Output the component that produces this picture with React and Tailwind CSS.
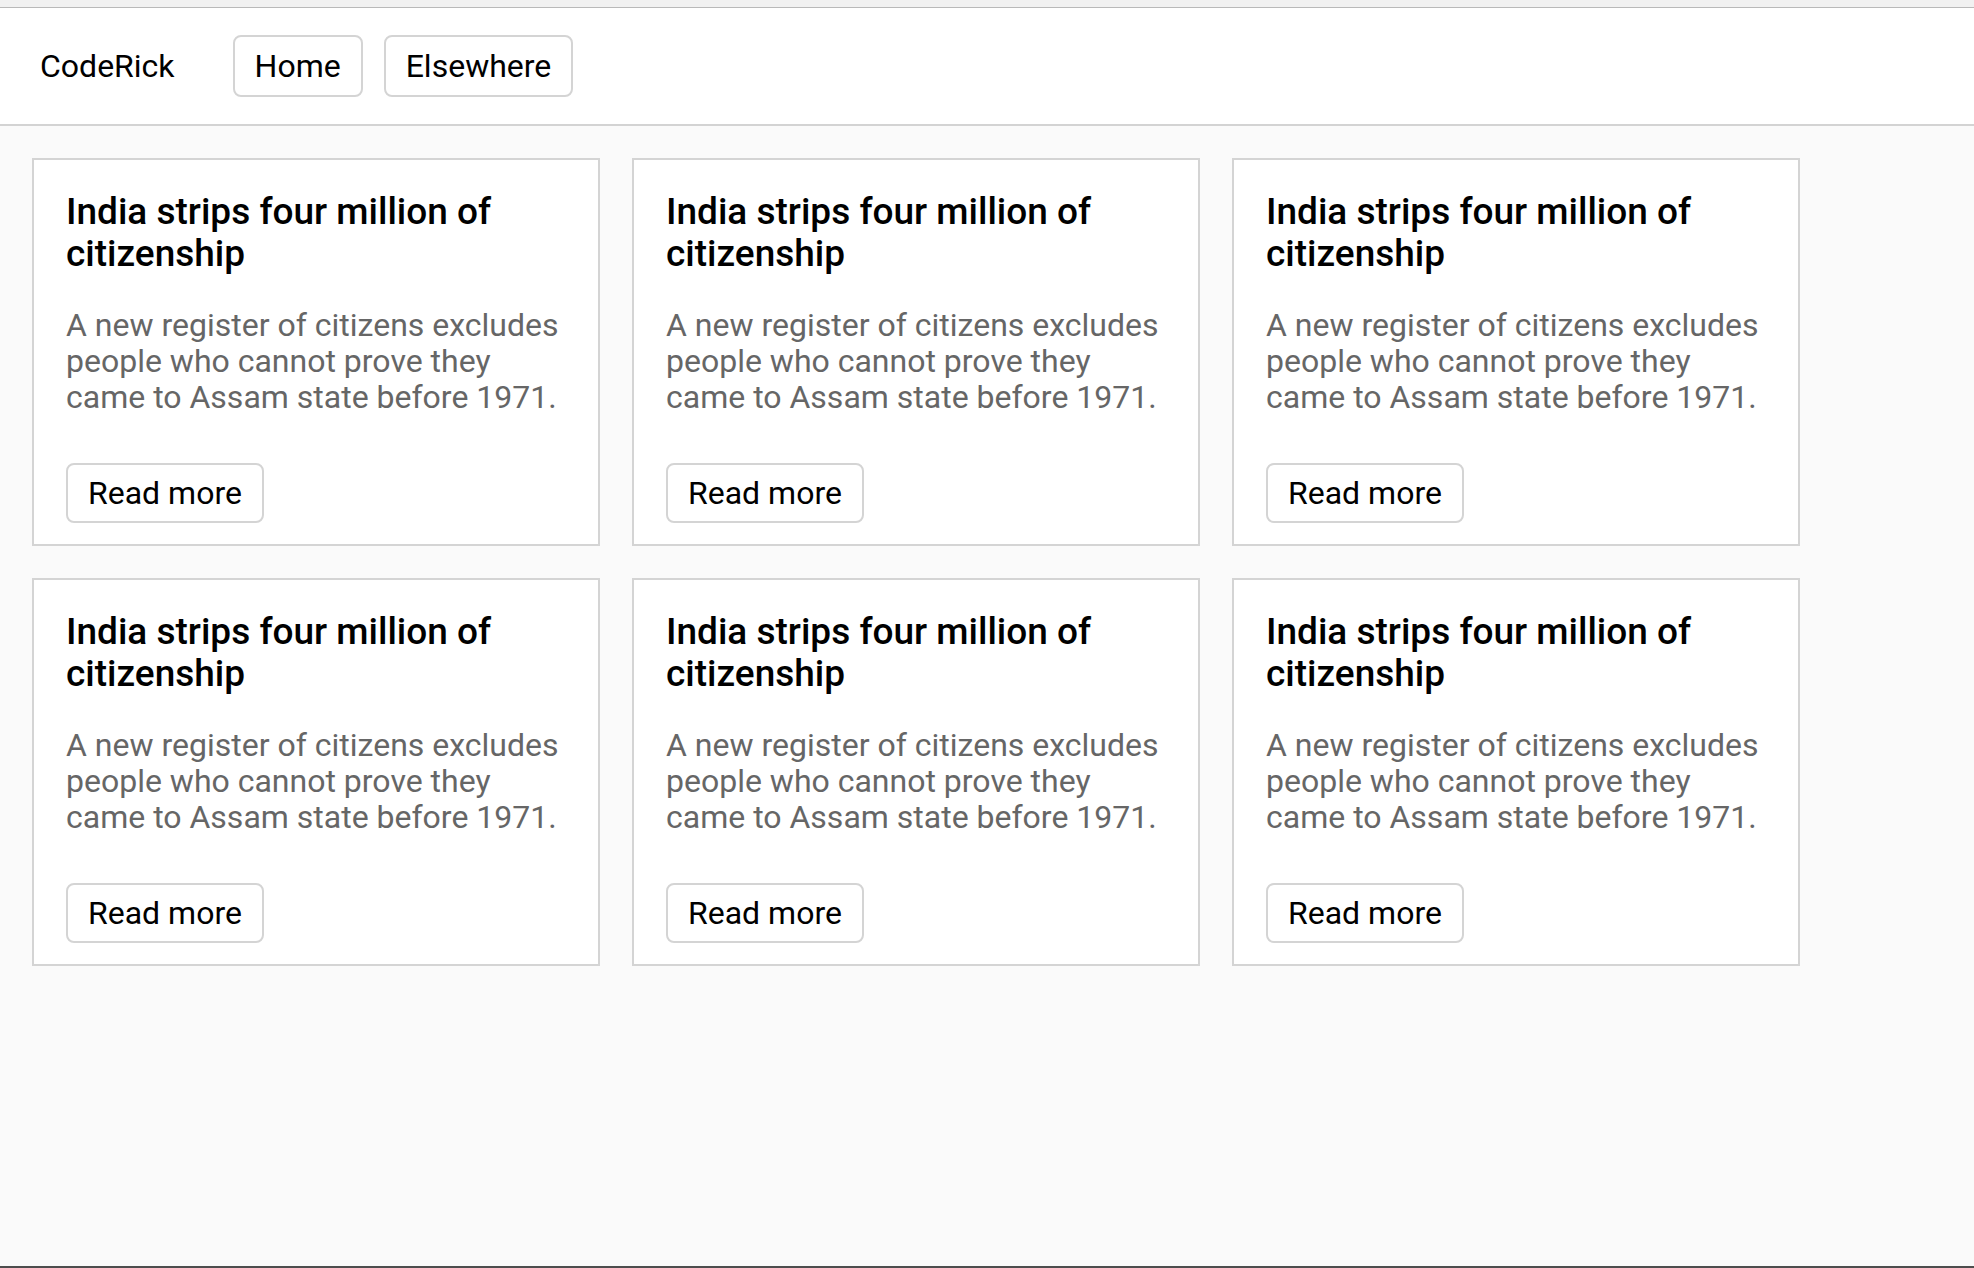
const cards = Array.from({ length: 6 }, (_, i) => ({
  id: i,
  title: "India strips four million of citizenship",
  text: "A new register of citizens excludes people who cannot prove they came to Assam state before 1971.",
}));

const Card = ({ title, text }) => (
  <div className="w-[568px] bg-white border-2 border-[#d4d4d4] pt-[31px] px-[32px] pb-[21px]">
    <h2 className="text-[37px] leading-[42px] font-medium text-black">{title}</h2>
    <p className="mt-[32px] text-[32px] leading-[36px] text-[#666666]">{text}</p>
    <button className="mt-[48px] h-[60px] px-5 bg-white border-2 border-[#d4d4d4] rounded-lg text-[32px] text-black">
      Read more
    </button>
  </div>
);

export default function App() {
  return (
    <div className="h-screen flex flex-col bg-[#fafafa] font-['Roboto',sans-serif]">
      <div className="h-[8px] bg-[#f1f1f1] border-b border-[#b9b9b9]" />
      <header className="h-[118px] bg-white border-b-2 border-[#d3d3d3] flex items-center pl-[40px]">
        <span className="text-[32px] text-black mr-[58px]">CodeRick</span>
        <nav className="flex gap-[21px]">
          <button className="h-[62px] px-5 bg-white border-2 border-[#d4d4d4] rounded-lg text-[32px] text-black">
            Home
          </button>
          <button className="h-[62px] px-5 bg-white border-2 border-[#d4d4d4] rounded-lg text-[32px] text-black">
            Elsewhere
          </button>
        </nav>
      </header>
      <main className="flex-1 p-8 flex flex-wrap content-start gap-8">
        {cards.map((c) => (
          <Card key={c.id} title={c.title} text={c.text} />
        ))}
      </main>
      <div className="h-[2px] bg-[#4d4d4d]" />
    </div>
  );
}
